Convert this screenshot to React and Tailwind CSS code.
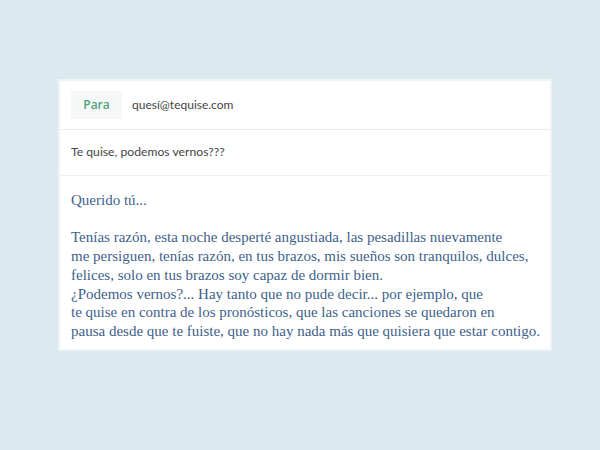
const Letter = () => {
  const body = [
    'Tenías razón, esta noche desperté angustiada, las pesadillas nuevamente',
    'me persiguen, tenías razón, en tus brazos, mis sueños son tranquilos, dulces,',
    'felices, solo en tus brazos soy capaz de dormir bien.',
    '¿Podemos vernos?... Hay tanto que no pude decir... por ejemplo, que',
    'te quise en contra de los pronósticos, que las canciones se quedaron en',
    'pausa desde que te fuiste, que no hay nada más que quisiera que estar contigo.',
  ];

  return (
    <div className="w-[494px] bg-white border-2 border-[#eef4f6]">
      <div className="flex items-center h-[49px] px-[11px] border-b border-[#ececec]">
        <div className="w-[51px] h-[28px] flex items-center justify-center bg-[#f6f8f8] text-[#4f9f7a] text-[12px] font-semibold font-['Open_Sans',sans-serif]">
          Para
        </div>
        <span className="ml-[10px] text-[12px] text-[#444] font-['Lato',sans-serif]">quesí@tequise.com</span>
      </div>
      <div className="flex items-center h-[46px] px-[11px] border-b border-[#f0f0f0] text-[12.2px] text-[#444] font-['Lato',sans-serif]">
        Te quise, podemos vernos???
      </div>
      <div className="px-[11px] pt-[15px] pb-[8px] text-[#3e5f8a] text-[15px] leading-[18.7px] font-['Liberation_Serif',serif] whitespace-nowrap">
        <p>Querido tú...</p>
        <p className="h-[18.7px]"></p>
        {body.map((line) => (
          <p key={line}>{line}</p>
        ))}
      </div>
    </div>
  );
};

export default function App() {
  return (
    <div className="w-[600px] h-[450px] bg-[#dbeaee] pt-[79px] pl-[58px]">
      <Letter />
    </div>
  );
}
